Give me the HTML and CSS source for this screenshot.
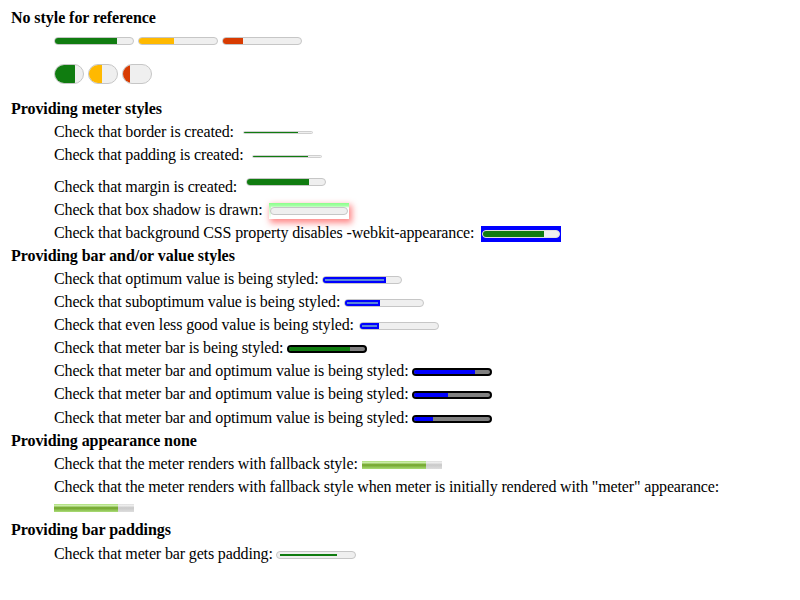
FILE: index.html
```html
<!DOCTYPE html>
<html>
<head>
<meta charset="utf-8">
<link rel="stylesheet" href="styles.css">
</head>
<body>
<div class="page">
  <div class="h">No style for reference</div>
  <div class="bars">
    <span class="m"><span class="f green" style="width:80%"></span></span>
    <span class="m"><span class="f yellow" style="width:45%"></span></span>
    <span class="m"><span class="f red" style="width:25%"></span></span>
  </div>
  <div class="pills">
    <span class="m pill"><span class="f green" style="width:70%"></span></span>
    <span class="m pill"><span class="f yellow" style="width:45%"></span></span>
    <span class="m pill"><span class="f red" style="width:25%"></span></span>
  </div>

  <div class="h h2">Providing meter styles</div>
  <div class="item">Check that border is created: <span class="m thin"><span class="f green" style="width:80%"></span></span></div>
  <div class="item">Check that padding is created: <span class="m thin soft"><span class="f green" style="width:80%"></span></span></div>
  <div class="item tall">Check that margin is created: <span class="m mg"><span class="f green" style="width:80%"></span></span></div>
  <div class="item">Check that box shadow is drawn: <span class="m shadow"><span class="inner"></span></span></div>
  <div class="item">Check that background CSS property disables -webkit-appearance: <span class="m bgblue"><span class="inner"><span class="f green" style="width:80%"></span></span></span></div>

  <div class="h">Providing bar and/or value styles</div>
  <div class="item">Check that optimum value is being styled: <span class="m"><span class="f optv" style="width:80%"></span></span></div>
  <div class="item">Check that suboptimum value is being styled: <span class="m"><span class="f optv" style="width:45%"></span></span></div>
  <div class="item">Check that even less good value is being styled: <span class="m nudge"><span class="f optv" style="width:25%"></span></span></div>
  <div class="item">Check that meter bar is being styled: <span class="m dark"><span class="f green" style="width:80%"></span></span></div>
  <div class="item">Check that meter bar and optimum value is being styled: <span class="m dark"><span class="f blue" style="width:80%"></span></span></div>
  <div class="item plus">Check that meter bar and optimum value is being styled: <span class="m dark"><span class="f blue" style="width:45%"></span></span></div>
  <div class="item">Check that meter bar and optimum value is being styled: <span class="m dark"><span class="f blue" style="width:25%"></span></span></div>

  <div class="h">Providing appearance none</div>
  <div class="item">Check that the meter renders with fallback style: <span class="m fb"><span class="f fbv" style="width:80%"></span></span></div>
  <div class="item">Check that the meter renders with fallback style when meter is initially rendered with "meter" appearance:</div>
  <div class="solo"><span class="m fb"><span class="f fbv" style="width:80%"></span></span></div>

  <div class="h plus">Providing bar paddings</div>
  <div class="item">Check that meter bar gets padding: <span class="m pad"><span class="f green" style="width:80%"></span></span></div>
</div>
</body>
</html>
```
FILE: styles.css
```css
body {
  margin: 0;
  font-family: "Liberation Serif", "Times New Roman", serif;
  font-size: 16px;
  color: #000;
  background: #fff;
}
.page {
  padding: 6px 0 0 11px;
}
.h {
  font-weight: bold;
  line-height: 23px;
  height: 23px;
  letter-spacing: -0.06px;
}
.h2 {
  margin-top: 13px;
}
.plus {
  height: 24px;
}
.item {
  margin-left: 43px;
  line-height: 23px;
  height: 23px;
  white-space: nowrap;
  letter-spacing: -0.14px;
}
.item.plus {
  height: 24px;
}
.item.tall {
  height: 23px;
  padding-top: 9px;
}
.bars {
  display: flex;
  gap: 4px;
  margin: 8px 0 0 43px;
  height: 8px;
}
.pills {
  display: flex;
  gap: 4px;
  margin: 19px 0 0 43px;
  height: 20px;
}
.m {
  display: inline-block;
  vertical-align: middle;
  box-sizing: border-box;
  width: 80px;
  height: 8px;
  border: 1px solid #c6c6c6;
  border-radius: 4px;
  background: #efefef;
  overflow: hidden;
  letter-spacing: 0;
}
.f {
  display: block;
  height: 100%;
}
.green { background: #107c10; }
.yellow { background: #ffb900; }
.red { background: #d83b01; }
.blue { background: #0000ff; }

.pill {
  width: 30px;
  height: 20px;
  border-radius: 10px;
}

.thin {
  width: 70px;
  height: 3px;
  border-radius: 1.5px;
  border-color: #cfcfcf;
  margin-left: 5px;
  vertical-align: top;
  margin-top: 11px;
}
.thin.soft {
  margin-top: 11.5px;
}
.mg {
  vertical-align: top;
  margin-top: 3px;
  margin-left: 5px;
}
.nudge {
  margin-left: 1px;
}
.shadow {
  height: 16px;
  border: none;
  border-radius: 0;
  overflow: visible;
  margin-left: 3px;
  padding: 4px 1px 0;
  background:
    linear-gradient(to bottom, #8cff8c 0, #a8ffa8 3px, rgba(255, 255, 255, 0) 5px),
    linear-gradient(to bottom, #a8ffa8 0, #ffffff 100%) left top / 2px 100% no-repeat,
    #fff;
  box-shadow: 2px 3px 6px 1px rgba(255, 40, 40, 0.55);
}
.inner {
  display: block;
  box-sizing: border-box;
  height: 8px;
  border: 1px solid #c6c6c6;
  border-radius: 4px;
  background: #efefef;
  overflow: hidden;
}
.bgblue {
  height: 16px;
  border: none;
  border-radius: 0;
  margin-left: 3px;
  background: #0000ff;
  padding: 4px 1px;
}
.bgblue .inner {
  border-color: #e0e0e0;
}
.optv {
  box-sizing: border-box;
  border: 2px solid #0000ff;
  background: #5a86d6;
}
.dark {
  border: 2px solid #000;
  background: #808080;
}
.fb {
  border: none;
  border-radius: 0;
  background: linear-gradient(to bottom, #ddd, #eee 20%, #ccc 45%, #ccc 55%, #ddd);
}
.fbv {
  background: linear-gradient(to bottom, #ad7, #cea 20%, #7a3 45%, #7a3 55%, #ad7);
}
.solo {
  margin-left: 43px;
  height: 20px;
  display: flex;
  align-items: flex-start;
}
.solo .m {
  margin-top: 6px;
}
.pad {
  padding: 2px 3px;
  margin-left: -1px;
}
```
